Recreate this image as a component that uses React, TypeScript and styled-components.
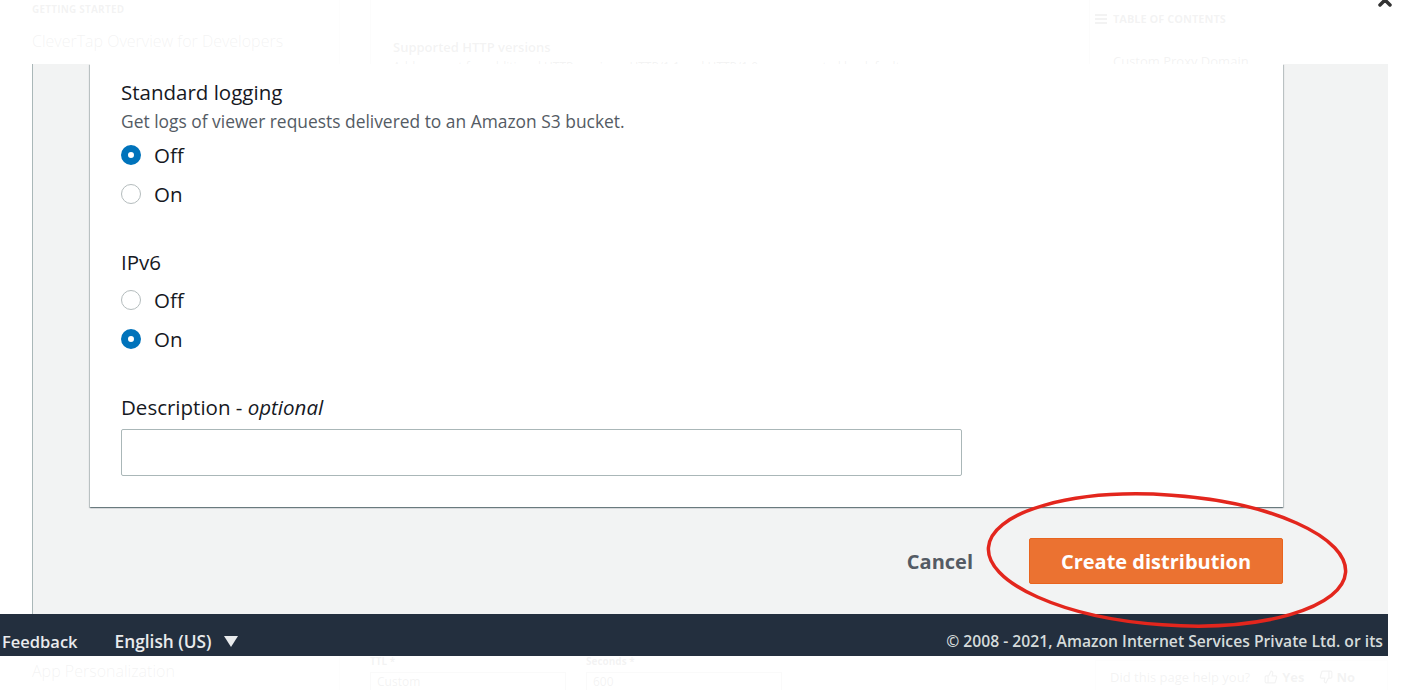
import React from "react";
import styled, { createGlobalStyle } from "styled-components";

const GlobalStyle = createGlobalStyle`
    html, body {
        margin: 0;
        padding: 0;
        background: #ffffff;
        font-family: "Open Sans", "Noto Sans", sans-serif;
        overflow: hidden;
    }
`;

// ---------- docs page behind the lightbox ----------

const Page = styled.div`
    display: grid;
    grid-template-columns: 340px 750px 1fr;
    height: 100vh;
    color: #333333;
`;

const Sidebar = styled.nav`
    display: flex;
    flex-direction: column;
    justify-content: space-between;
    padding: 2px 0 8px 32px;
    border-right: 1px solid #dddddd;
`;

const SideTop = styled.div`
    display: flex;
    flex-direction: column;
    gap: 14px;
`;

const SideHeading = styled.div`
    font-size: 10px;
    font-weight: 700;
    letter-spacing: 0.2px;
`;

const SideLink = styled.div`
    font-size: 16px;
    font-weight: 300;
`;

const Main = styled.main`
    display: flex;
    flex-direction: column;
    justify-content: space-between;
    padding: 0 0 0 30px;
`;

const ContentBox = styled.div`
    border-left: 1px solid #cccccc;
    border-right: 1px solid #cccccc;
    padding: 38px 20px 0 22px;
`;

const BoxTitle = styled.div`
    font-size: 13px;
    font-weight: 600;
`;

const BoxText = styled.div`
    font-size: 12px;
    margin-top: 2px;
`;

const FieldRow = styled.div`
    display: grid;
    grid-template-columns: 216px 200px;
    margin-bottom: -2px;
`;

const FieldLabel = styled.div`
    font-size: 10px;
    font-weight: 700;
`;

const FieldSelect = styled.div`
    margin-top: 4px;
    width: 196px;
    height: 20px;
    border: 1px solid #aaaaaa;
    font-size: 12px;
    line-height: 16px;
    padding: 1px 6px;
    box-sizing: border-box;
`;

const Toc = styled.aside`
    display: flex;
    flex-direction: column;
    justify-content: space-between;
    padding: 11px 0 0 5px;
`;

const TocTop = styled.div`
    display: flex;
    flex-direction: column;
    gap: 26px;
`;

const TocHeading = styled.div`
    display: flex;
    align-items: center;
    gap: 6px;
    font-size: 11px;
    font-weight: 700;
`;

const TocLink = styled.div`
    font-size: 13px;
    padding-left: 18px;
`;

const HelpBox = styled.div`
    display: flex;
    align-items: center;
    gap: 14px;
    height: 32px;
    padding: 0 10px 0 14px;
    border: 1px solid #dddddd;
    border-bottom: none;
    font-size: 13px;
    margin: 0 17px -3px 0;
`;

const HelpChoice = styled.span`
    display: flex;
    align-items: center;
    gap: 4px;
    font-weight: 700;
`;

const Backdrop = styled.div`
    position: fixed;
    inset: 0;
    background: rgba(255, 255, 255, 0.94);
`;

const CloseButton = styled.div`
    position: fixed;
    top: -9px;
    right: 12px;
    width: 16px;
    height: 16px;
`;

// ---------- lightbox with the AWS console screenshot ----------

const Lightbox = styled.figure`
    position: fixed;
    top: 64px;
    left: 0;
    margin: 0;
    width: 1388px;
    height: 592px;
    overflow: hidden;
    display: flex;
    flex-direction: column;
    background: #ffffff;
    font-family: "Open Sans", "Noto Sans", sans-serif;
`;

const ConsoleArea = styled.div`
    flex: 0 0 550px;
    display: flex;
`;

const ContentPane = styled.div`
    flex: 1;
    margin-left: 32px;
    border-left: 1px solid #aab7b8;
    background: #f2f3f3;
    padding: 0 105px 0 57px;
    display: flex;
    flex-direction: column;
`;

const Card = styled.div`
    background: #ffffff;
    padding: 14px 31px 31px 31px;
    box-shadow: 0 1px 1px 0 rgba(0, 28, 36, 0.35), 1px 1px 1px 0 rgba(0, 28, 36, 0.18),
        -1px 1px 1px 0 rgba(0, 28, 36, 0.18);
    display: flex;
    flex-direction: column;
    gap: 35px;
`;

const Section = styled.div`
    display: flex;
    flex-direction: column;
`;

const Label = styled.div`
    font-size: 20.5px;
    line-height: 28px;
    color: #16191f;
`;

const Optional = styled.i`
    font-style: italic;
`;

const Hint = styled.div`
    margin-top: 3px;
    font-size: 17.4px;
    line-height: 24px;
    color: #545b64;
`;

const RadioGroup = styled.div<{ $offset: number }>`
    margin-top: ${p => p.$offset}px;
    display: flex;
    flex-direction: column;
`;

const RadioRow = styled.label`
    display: flex;
    align-items: center;
    gap: 13px;
    height: 39px;
    font-size: 20.5px;
    color: #16191f;
`;

const RadioDot = styled.span<{ $checked: boolean }>`
    width: 20px;
    height: 20px;
    box-sizing: border-box;
    border-radius: 50%;
    background: #ffffff;
    border: ${p => (p.$checked ? "7px solid #0073bb" : "1.5px solid #b4bcbd")};
`;

const TextBox = styled.div`
    margin-top: 8px;
    width: 841px;
    height: 47px;
    box-sizing: border-box;
    border: 1px solid #aab7b8;
    border-radius: 2px;
    background: #ffffff;
`;

const Actions = styled.div`
    margin-top: 31px;
    display: flex;
    justify-content: flex-end;
    align-items: center;
    gap: 56px;
`;

const CancelButton = styled.span`
    font-size: 20px;
    font-weight: 700;
    color: #545b64;
`;

const PrimaryButton = styled.span`
    width: 254px;
    height: 46px;
    box-sizing: border-box;
    display: flex;
    align-items: center;
    justify-content: center;
    background: #eb7231;
    border: 1px solid #e9641e;
    border-radius: 2px;
    color: #ffffff;
    font-size: 20px;
    font-weight: 700;
`;

const ConsoleFooter = styled.footer`
    flex: 0 0 54px;
    background: #232f3e;
    display: flex;
    align-items: center;
    padding: 0 5px 0 2px;
    font-size: 16.5px;
    font-weight: 600;
    color: #e9ebed;
`;

const FooterLink = styled.span<{ $gap?: number }>`
    display: flex;
    align-items: center;
    gap: 11px;
    margin-right: ${p => p.$gap ?? 0}px;
`;

const LanguageName = styled.span`
    font-size: 17.3px;
`;

const Copyright = styled.span`
    margin-left: auto;
    font-size: 15.7px;
    color: #d5dbdb;
`;

const Annotation = styled.svg`
    position: absolute;
    left: 0;
    top: 0;
    pointer-events: none;
`;

const Radio: React.FunctionComponent<{ label: string; checked: boolean }> = ({ label, checked }) => (
    <RadioRow>
        <RadioDot $checked={checked} />
        {label}
    </RadioRow>
);

const Thumb = ({ down }: { down?: boolean }) => (
    <svg width="14" height="14" viewBox="0 0 24 24" fill="none" stroke="currentColor" strokeWidth="2"
        style={down ? { transform: "rotate(180deg)" } : undefined}>
        <path d="M7 10v12M15 5.9L14 10h5.8a2 2 0 0 1 1.9 2.6l-2.3 8A2 2 0 0 1 17.5 22H4a2 2 0 0 1-2-2v-8a2 2 0 0 1 2-2h2.8a2 2 0 0 0 1.8-1.1L12 2a3.1 3.1 0 0 1 3 3.9z" />
    </svg>
);

export default function App() {
    return (
        <>
            <GlobalStyle />
            <Page>
                <Sidebar>
                    <SideTop>
                        <SideHeading>GETTING STARTED</SideHeading>
                        <SideLink>CleverTap Overview for Developers</SideLink>
                    </SideTop>
                    <SideLink>App Personalization</SideLink>
                </Sidebar>
                <Main>
                    <ContentBox>
                        <BoxTitle>Supported HTTP versions</BoxTitle>
                        <BoxText>Add support for additional HTTP versions. HTTP/1.1 and HTTP/1.0 are supported by default.</BoxText>
                    </ContentBox>
                    <FieldRow>
                        <div>
                            <FieldLabel>TTL *</FieldLabel>
                            <FieldSelect>Custom</FieldSelect>
                        </div>
                        <div>
                            <FieldLabel>Seconds *</FieldLabel>
                            <FieldSelect>600</FieldSelect>
                        </div>
                    </FieldRow>
                </Main>
                <Toc>
                    <TocTop>
                        <TocHeading>
                            <svg width="12" height="12" viewBox="0 0 12 12" fill="currentColor">
                                <rect x="0" y="1" width="12" height="2" />
                                <rect x="0" y="5" width="12" height="2" />
                                <rect x="0" y="9" width="12" height="2" />
                            </svg>
                            TABLE OF CONTENTS
                        </TocHeading>
                        <TocLink>Custom Proxy Domain</TocLink>
                    </TocTop>
                    <HelpBox>
                        Did this page help you?
                        <HelpChoice><Thumb />Yes</HelpChoice>
                        <HelpChoice><Thumb down />No</HelpChoice>
                    </HelpBox>
                </Toc>
            </Page>
            <Backdrop />
            <CloseButton>
                <svg width="16" height="16" viewBox="0 0 16 16" stroke="#333" strokeWidth="3.5" strokeLinecap="round">
                    <path d="M3 3l10 10M13 3L3 13" />
                </svg>
            </CloseButton>
            <Lightbox>
                <ConsoleArea>
                    <ContentPane>
                        <Card>
                            <Section>
                                <Label>Standard logging</Label>
                                <Hint>Get logs of viewer requests delivered to an Amazon S3 bucket.</Hint>
                                <RadioGroup $offset={2}>
                                    <Radio label="Off" checked={true} />
                                    <Radio label="On" checked={false} />
                                </RadioGroup>
                            </Section>
                            <Section>
                                <Label>IPv6</Label>
                                <RadioGroup $offset={4}>
                                    <Radio label="Off" checked={false} />
                                    <Radio label="On" checked={true} />
                                </RadioGroup>
                            </Section>
                            <Section>
                                <Label>Description - <Optional>optional</Optional></Label>
                                <TextBox />
                            </Section>
                        </Card>
                        <Actions>
                            <CancelButton>Cancel</CancelButton>
                            <PrimaryButton>Create distribution</PrimaryButton>
                        </Actions>
                    </ContentPane>
                </ConsoleArea>
                <ConsoleFooter>
                    <FooterLink $gap={37}>Feedback</FooterLink>
                    <FooterLink>
                        <LanguageName>English (US)</LanguageName>
                        <svg width="16" height="13" viewBox="0 0 16 13" fill="#e9ebed">
                            <polygon points="1,1 15,1 8,12" />
                        </svg>
                    </FooterLink>
                    <Copyright>© 2008 - 2021, Amazon Internet Services Private Ltd. or its</Copyright>
                </ConsoleFooter>
                <Annotation width="1388" height="592" viewBox="0 0 1388 592">
                    <ellipse cx="1167" cy="496" rx="179" ry="65" fill="none" stroke="#e3261d"
                        strokeWidth="3.5" transform="rotate(4 1167 496)" />
                </Annotation>
            </Lightbox>
        </>
    );
}
